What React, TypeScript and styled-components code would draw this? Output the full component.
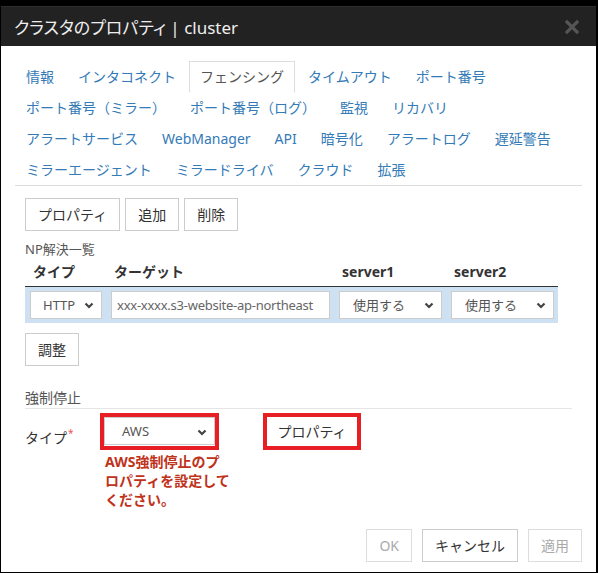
import React from "react";
import styled, { createGlobalStyle } from "styled-components";

const Global = createGlobalStyle`
  html, body { margin: 0; padding: 0; }
  body {
    background: #000;
    font-family: "Noto Sans", "Noto Sans CJK JP", sans-serif;
  }
  * { box-sizing: border-box; }
`;

const Dialog = styled.div`
  margin: 6px 2px 1px 1px;
  width: 595px;
  height: 566px;
  background: #fff;
  display: flex;
  flex-direction: column;
`;

const TitleBar = styled.div`
  height: 40px;
  background: #222;
  border-top: 1px solid #2e2e2e;
  display: flex;
  align-items: center;
  justify-content: space-between;
  padding: 0 17px 0 13px;
  color: #eee;
  font-size: 17px;
  font-feature-settings: "palt";
`;

const Title = styled.div`
  white-space: pre;
`;

const Close = styled.button`
  border: none;
  background: none;
  padding: 0;
  display: flex;
  cursor: pointer;
`;

const Body = styled.div`
  flex: 1;
  padding: 15px 14px 0;
`;

const Tabs = styled.ul`
  display: flex;
  flex-wrap: wrap;
  list-style: none;
  margin: 0;
  padding: 0;
  border-bottom: 1px solid #ddd;
`;

const TabItem = styled.li`
  margin: 0 2px -1px 0;
`;

const TabLink = styled.a<{ $active?: boolean }>`
  display: block;
  line-height: 20px;
  font-size: 14px;
  text-decoration: none;
  white-space: nowrap;
  color: ${(p) => (p.$active ? "#555" : "#337ab7")};
  ${(p) =>
    p.$active
      ? "background: #fff; border: 1px solid #ddd; border-bottom-color: #fff; padding: 5px 10px;"
      : "background: transparent; border: none; padding: 6px 11px;"}
  cursor: pointer;
`;

const TabContent = styled.div`
  padding: 12px 10px 0;
`;

const ButtonRow = styled.div`
  display: flex;
  gap: 5px;
`;

const Button = styled.button`
  font-family: inherit;
  font-size: 14px;
  line-height: 19px;
  padding: 6px 12px;
  border: 1px solid #ccc;
  border-radius: 0;
  background: #fff;
  color: #333;
  white-space: nowrap;
  &:disabled {
    color: #aaa;
    border-color: #ddd;
  }
`;

const AdjustButton = styled(Button)`
  margin-top: 10px;
`;

const SmallLabel = styled.div`
  margin-top: 9px;
  font-size: 13px;
  line-height: 18px;
  color: #555;
`;

const Table = styled.div`
  width: 533px;
  display: grid;
  grid-template-columns: 81px 228px 112px 112px;
`;

const HeadCell = styled.div`
  height: 29px;
  line-height: 28px;
  padding: 0 7px 0 8px;
  font-size: 14px;
  font-weight: bold;
  color: #333;
  border-bottom: 1px solid #333;
`;

const Cell = styled.div`
  background: #cde1f3;
  padding: 4px 4px 4px 5px;
  height: 36px;
`;

const SelectWrap = styled.div`
  position: relative;
  width: 100%;
`;

const Select = styled.select<{ $pad?: number }>`
  appearance: none;
  -webkit-appearance: none;
  width: 100%;
  height: 28px;
  border: 1px solid #ccc;
  border-radius: 0;
  background: #fff;
  font-family: inherit;
  font-size: 13px;
  color: #555;
  padding: 0 0 0 ${(p) => p.$pad ?? 12}px;
  outline: none;
`;

const Chevron = styled.svg`
  position: absolute;
  right: 8px;
  top: 50%;
  margin-top: -3px;
  pointer-events: none;
`;

const TextInput = styled.input`
  width: 100%;
  height: 28px;
  border: 1px solid #ccc;
  border-radius: 0;
  padding: 0 5px;
  font-family: inherit;
  font-size: 13px;
  letter-spacing: -0.25px;
  color: #666;
  outline: none;
`;

const Legend = styled.div`
  margin-top: 22px;
  font-size: 14px;
  line-height: 20px;
  color: #555;
  border-bottom: 1px solid #e5e5e5;
`;

const FormRow = styled.div`
  margin-top: 4px;
  display: flex;
  align-items: flex-start;
`;

const FieldLabel = styled.div`
  width: 75px;
  padding-top: 10px;
  font-size: 14px;
  line-height: 20px;
  color: #333;
`;

const Required = styled.sup`
  color: #e55;
  font-size: 10px;
  margin-left: 1px;
`;

const ControlCol = styled.div`
  width: 163px;
`;

const RedFrame = styled.div<{ $w: number }>`
  width: ${(p) => p.$w}px;
  height: 37px;
  border: 4px solid #e81e25;
  display: flex;
`;

const ErrorText = styled.div`
  margin: 2px 0 0 5px;
  width: 128px;
  font-size: 14px;
  font-weight: bold;
  line-height: 19px;
  color: #c0321a;
`;

const FramedButton = styled(Button)`
  width: 100%;
  height: 100%;
  border: none;
  padding: 0;
`;

const Footer = styled.div`
  display: flex;
  justify-content: flex-end;
  gap: 10px;
  padding: 0 14px 10px;
`;

const ChevronIcon = () => (
  <Chevron width="10" height="7" viewBox="0 0 10 7">
    <polyline points="1.5,1.5 5,5 8.5,1.5" fill="none" stroke="#444" strokeWidth="2.2" />
  </Chevron>
);

const tabs: string[] = [
  "情報",
  "インタコネクト",
  "フェンシング",
  "タイムアウト",
  "ポート番号",
  "ポート番号（ミラー）",
  "ポート番号（ログ）",
  "監視",
  "リカバリ",
  "アラートサービス",
  "WebManager",
  "API",
  "暗号化",
  "アラートログ",
  "遅延警告",
  "ミラーエージェント",
  "ミラードライバ",
  "クラウド",
  "拡張",
];

export default function App() {
  return (
    <>
      <Global />
      <Dialog>
        <TitleBar>
          <Title>クラスタのプロパティ | cluster</Title>
          <Close aria-label="close">
            <svg width="14" height="14" viewBox="0 0 14 14">
              <path d="M2 2 L12 12 M12 2 L2 12" stroke="#555" strokeWidth="3.2" strokeLinecap="square" />
            </svg>
          </Close>
        </TitleBar>
        <Body>
          <Tabs>
            {tabs.map((t) => (
              <TabItem key={t}>
                <TabLink $active={t === "フェンシング"}>{t}</TabLink>
              </TabItem>
            ))}
          </Tabs>
          <TabContent>
            <ButtonRow>
              <Button>プロパティ</Button>
              <Button>追加</Button>
              <Button>削除</Button>
            </ButtonRow>
            <SmallLabel>NP解決一覧</SmallLabel>
            <Table>
              <HeadCell>タイプ</HeadCell>
              <HeadCell>ターゲット</HeadCell>
              <HeadCell>server1</HeadCell>
              <HeadCell>server2</HeadCell>
              <Cell>
                <SelectWrap>
                  <Select defaultValue="HTTP">
                    <option>HTTP</option>
                  </Select>
                  <ChevronIcon />
                </SelectWrap>
              </Cell>
              <Cell>
                <TextInput defaultValue="xxx-xxxx.s3-website-ap-northeast" />
              </Cell>
              <Cell>
                <SelectWrap>
                  <Select $pad={13} defaultValue="使用する">
                    <option>使用する</option>
                  </Select>
                  <ChevronIcon />
                </SelectWrap>
              </Cell>
              <Cell>
                <SelectWrap>
                  <Select $pad={13} defaultValue="使用する">
                    <option>使用する</option>
                  </Select>
                  <ChevronIcon />
                </SelectWrap>
              </Cell>
            </Table>
            <AdjustButton>調整</AdjustButton>
            <Legend>強制停止</Legend>
            <FormRow>
              <FieldLabel>
                タイプ<Required>*</Required>
              </FieldLabel>
              <ControlCol>
                <RedFrame $w={119}>
                  <SelectWrap>
                    <Select $pad={17} defaultValue="AWS">
                      <option>AWS</option>
                    </Select>
                    <ChevronIcon />
                  </SelectWrap>
                </RedFrame>
                <ErrorText>AWS強制停止のプロパティを設定してください。</ErrorText>
              </ControlCol>
              <RedFrame $w={98}>
                <FramedButton>プロパティ</FramedButton>
              </RedFrame>
            </FormRow>
          </TabContent>
        </Body>
        <Footer>
          <Button disabled>OK</Button>
          <Button>キャンセル</Button>
          <Button disabled>適用</Button>
        </Footer>
      </Dialog>
    </>
  );
}
